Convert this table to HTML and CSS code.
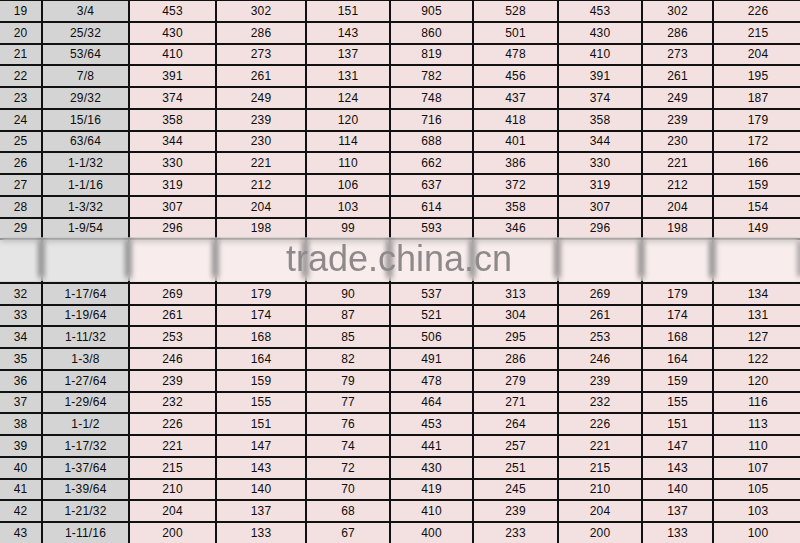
FILE: index.html
```html
<!DOCTYPE html>
<html lang="en">
<head>
<meta charset="utf-8">
<title>Size chart</title>
<link rel="stylesheet" href="styles.css">
</head>
<body>
<div class="sheet">
<table class="chart">
<colgroup>
<col class="c-no"><col class="c-size"><col class="c-a"><col class="c-b"><col class="c-c"><col class="c-d"><col class="c-e"><col class="c-f"><col class="c-g"><col class="c-h">
</colgroup>
<tbody>
<tr class="r"><td class="k">19</td><td class="k">3/4</td><td>453</td><td>302</td><td>151</td><td>905</td><td>528</td><td>453</td><td>302</td><td>226</td></tr>
<tr class="r"><td class="k">20</td><td class="k">25/32</td><td>430</td><td>286</td><td>143</td><td>860</td><td>501</td><td>430</td><td>286</td><td>215</td></tr>
<tr class="r"><td class="k">21</td><td class="k">53/64</td><td>410</td><td>273</td><td>137</td><td>819</td><td>478</td><td>410</td><td>273</td><td>204</td></tr>
<tr class="r"><td class="k">22</td><td class="k">7/8</td><td>391</td><td>261</td><td>131</td><td>782</td><td>456</td><td>391</td><td>261</td><td>195</td></tr>
<tr class="r"><td class="k">23</td><td class="k">29/32</td><td>374</td><td>249</td><td>124</td><td>748</td><td>437</td><td>374</td><td>249</td><td>187</td></tr>
<tr class="r"><td class="k">24</td><td class="k">15/16</td><td>358</td><td>239</td><td>120</td><td>716</td><td>418</td><td>358</td><td>239</td><td>179</td></tr>
<tr class="r"><td class="k">25</td><td class="k">63/64</td><td>344</td><td>230</td><td>114</td><td>688</td><td>401</td><td>344</td><td>230</td><td>172</td></tr>
<tr class="r"><td class="k">26</td><td class="k">1-1/32</td><td>330</td><td>221</td><td>110</td><td>662</td><td>386</td><td>330</td><td>221</td><td>166</td></tr>
<tr class="r"><td class="k">27</td><td class="k">1-1/16</td><td>319</td><td>212</td><td>106</td><td>637</td><td>372</td><td>319</td><td>212</td><td>159</td></tr>
<tr class="r"><td class="k">28</td><td class="k">1-3/32</td><td>307</td><td>204</td><td>103</td><td>614</td><td>358</td><td>307</td><td>204</td><td>154</td></tr>
<tr class="r"><td class="k">29</td><td class="k">1-9/54</td><td>296</td><td>198</td><td>99</td><td>593</td><td>346</td><td>296</td><td>198</td><td>149</td></tr>
<tr class="gap"><td class="k"></td><td class="k"></td><td></td><td></td><td></td><td></td><td></td><td></td><td></td><td></td></tr>
<tr class="r"><td class="k">32</td><td class="k">1-17/64</td><td>269</td><td>179</td><td>90</td><td>537</td><td>313</td><td>269</td><td>179</td><td>134</td></tr>
<tr class="r"><td class="k">33</td><td class="k">1-19/64</td><td>261</td><td>174</td><td>87</td><td>521</td><td>304</td><td>261</td><td>174</td><td>131</td></tr>
<tr class="r"><td class="k">34</td><td class="k">1-11/32</td><td>253</td><td>168</td><td>85</td><td>506</td><td>295</td><td>253</td><td>168</td><td>127</td></tr>
<tr class="r"><td class="k">35</td><td class="k">1-3/8</td><td>246</td><td>164</td><td>82</td><td>491</td><td>286</td><td>246</td><td>164</td><td>122</td></tr>
<tr class="r"><td class="k">36</td><td class="k">1-27/64</td><td>239</td><td>159</td><td>79</td><td>478</td><td>279</td><td>239</td><td>159</td><td>120</td></tr>
<tr class="r"><td class="k">37</td><td class="k">1-29/64</td><td>232</td><td>155</td><td>77</td><td>464</td><td>271</td><td>232</td><td>155</td><td>116</td></tr>
<tr class="r"><td class="k">38</td><td class="k">1-1/2</td><td>226</td><td>151</td><td>76</td><td>453</td><td>264</td><td>226</td><td>151</td><td>113</td></tr>
<tr class="r"><td class="k">39</td><td class="k">1-17/32</td><td>221</td><td>147</td><td>74</td><td>441</td><td>257</td><td>221</td><td>147</td><td>110</td></tr>
<tr class="r"><td class="k">40</td><td class="k">1-37/64</td><td>215</td><td>143</td><td>72</td><td>430</td><td>251</td><td>215</td><td>143</td><td>107</td></tr>
<tr class="r"><td class="k">41</td><td class="k">1-39/64</td><td>210</td><td>140</td><td>70</td><td>419</td><td>245</td><td>210</td><td>140</td><td>105</td></tr>
<tr class="r"><td class="k">42</td><td class="k">1-21/32</td><td>204</td><td>137</td><td>68</td><td>410</td><td>239</td><td>204</td><td>137</td><td>103</td></tr>
<tr class="r"><td class="k">43</td><td class="k">1-11/16</td><td>200</td><td>133</td><td>67</td><td>400</td><td>233</td><td>200</td><td>133</td><td>100</td></tr>
</tbody>
</table>
<div class="band">
  <div class="smudges">
    <span class="s"></span><span class="s"></span><span class="s"></span><span class="s"></span><span class="s"></span><span class="s"></span><span class="s"></span><span class="s"></span><span class="s"></span><span class="s"></span>
  </div>
  <span class="mark">trade.china.cn</span>
</div>
</div>
</body>
</html>
```

FILE: styles.css
```css
html, body {
  margin: 0;
  padding: 0;
  background: #ffffff;
}
body {
  width: 800px;
  height: 543px;
  overflow: hidden;
}
.sheet {
  position: relative;
  width: 800px;
  height: 543px;
  overflow: hidden;
}
.chart {
  border-collapse: collapse;
  table-layout: fixed;
  width: 804px;
  margin: -1px 0 0 -2px;
  font-family: "Liberation Sans", Arial, sans-serif;
  font-size: 12px;
  color: #0c0c0c;
}
.c-no { width: 43px; }
.c-size { width: 87px; }
.c-a { width: 87px; }
.c-b { width: 90px; }
.c-c { width: 84px; }
.c-d { width: 83px; }
.c-e { width: 85px; }
.c-f { width: 84px; }
.c-g { width: 71px; }
.c-h { width: 90px; }
.chart td {
  border: 2px solid #111111;
  background: #f3e0e0;
  text-align: center;
  vertical-align: middle;
  padding: 0;
  line-height: 14px;
  letter-spacing: 0.2px;
}
.chart td.k {
  background: #d4d4d4;
}
.r { height: 21.75px; }
.gap { height: 43.5px; }
.band {
  position: absolute;
  left: 0;
  right: 0;
  top: 237px;
  height: 44px;
  background: rgba(255, 255, 255, 0.4);
  backdrop-filter: blur(3px);
  -webkit-backdrop-filter: blur(3px);
}
.smudges {
  display: grid;
  grid-template-columns: 41px 87px 87px 90px 84px 83px 85px 84px 71px 88px;
  height: 100%;
}
.s {
  position: relative;
}
.s::after {
  content: "";
  position: absolute;
  right: -3px;
  top: 4px;
  bottom: 4px;
  width: 6px;
  background: #6a6a6a;
  border-radius: 3px;
  filter: blur(2.8px);
  opacity: 0.55;
}
.mark {
  position: absolute;
  left: 286px;
  top: 4px;
  font-family: "Liberation Sans", Arial, sans-serif;
  font-size: 36px;
  line-height: 36px;
  color: #8e8a8a;
  white-space: nowrap;
}
```
